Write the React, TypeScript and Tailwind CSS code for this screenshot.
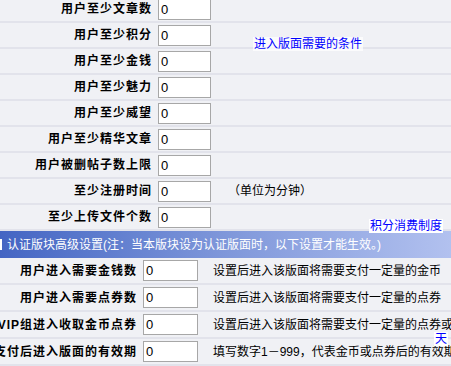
import React from "react";

type Row = { label: string; note?: string };

const topRows: Row[] = [
  { label: "用户至少文章数" },
  { label: "用户至少积分" },
  { label: "用户至少金钱" },
  { label: "用户至少魅力" },
  { label: "用户至少威望" },
  { label: "用户至少精华文章" },
  { label: "用户被删帖子数上限" },
  { label: "至少注册时间", note: "（单位为分钟）" },
  { label: "至少上传文件个数" },
];

const bottomRows: Row[] = [
  { label: "用户进入需要金钱数", note: "设置后进入该版面将需要支付一定量的金币" },
  { label: "用户进入需要点券数", note: "设置后进入该版面将需要支付一定量的点券" },
  { label: "VIP组进入收取金币点券", note: "设置后进入该版面将需要支付一定量的点券或金币" },
  { label: "支付后进入版面的有效期", note: "填写数字1－999，代表金币或点券后的有效期" },
];

const font = "font-['Liberation_Sans','Noto_Sans_CJK_SC',sans-serif]";

function Field() {
  return (
    <input
      defaultValue="0"
      className="h-[21px] w-full border border-[#a7a7a7] bg-white px-[2px] text-[13px] text-black outline-none"
    />
  );
}

export default function App() {
  return (
    <div className={`relative h-[366px] w-[451px] overflow-hidden bg-[#f0f1f5] text-[12px] leading-[14px] text-black ${font}`}>
      <div className="-mt-[3px] flex flex-col">
        {topRows.map((r) => (
          <div key={r.label} className="flex h-[26px] items-center border-b-2 border-[#e2e3eb] bg-[#f0f1f5]">
            <div className="flex w-[154px] shrink-0 justify-end whitespace-nowrap pr-[2px] font-bold tracking-[1px]">
              {r.label}
            </div>
            <div className="w-[57px] shrink-0 pl-[4px]">
              <Field />
            </div>
            {r.note && <span className="ml-[17px] whitespace-nowrap">{r.note}</span>}
          </div>
        ))}
        <div className="flex h-[27px] items-center whitespace-nowrap bg-gradient-to-r from-[#4465c3] via-[#7f97da] to-[#b2c1ef] text-white">
          <span className="mr-[5px] h-[11px] w-[2px] bg-white" />
          <span>认证版块高级设置(注：当本版块设为认证版面时，以下设置才能生效。)</span>
        </div>
        {bottomRows.map((r) => (
          <div key={r.label} className="flex h-[27px] items-center border-b-2 border-[#e2e3eb] bg-[#f0f1f5]">
            <div className="flex w-[139px] shrink-0 justify-end whitespace-nowrap pr-[2px] font-bold tracking-[1px]">
              {r.label}
            </div>
            <div className="w-[59px] shrink-0 pl-[4px]">
              <Field />
            </div>
            <span className="ml-[15px] whitespace-nowrap">{r.note}</span>
          </div>
        ))}
      </div>

      <span className="absolute left-[253px] top-[37px] bg-white/70 px-[1px] text-[#0000ff]">进入版面需要的条件</span>
      <span className="absolute left-[369px] top-[219px] bg-white px-[1px] text-[#0000ff]">积分消费制度</span>
      <span className="absolute left-[434px] top-[332px] bg-white px-[1px] text-[#0000ff]">天</span>
    </div>
  );
}
